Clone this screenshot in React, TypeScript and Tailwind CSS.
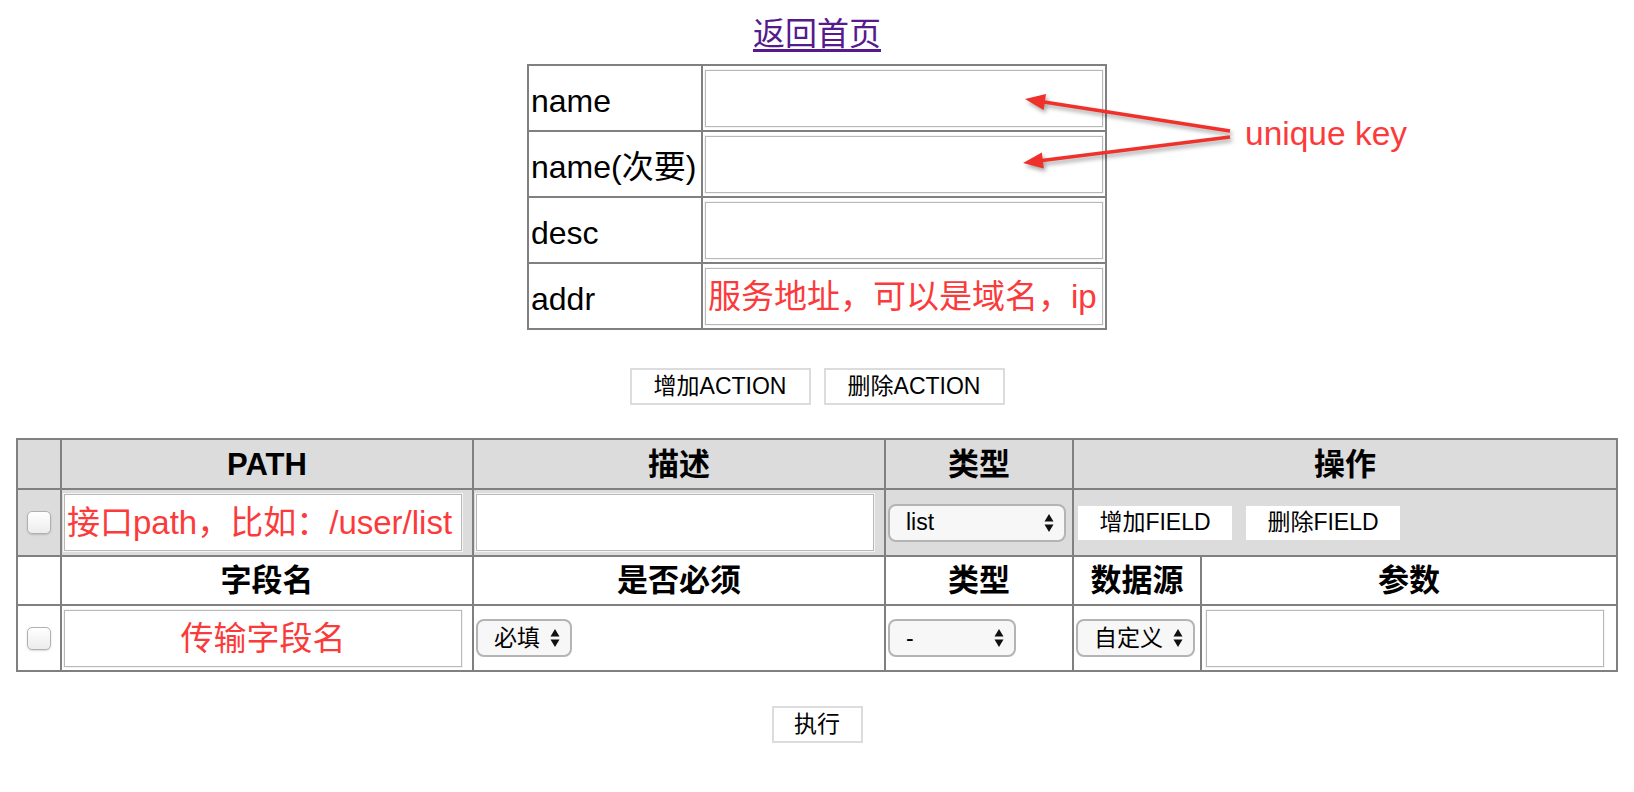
const fieldBox = "flex h-[57px] w-[398px] items-center overflow-hidden whitespace-nowrap border border-[#b8b8b8] bg-white px-[2px] text-[33px] leading-none text-[#fb3b3b] outline outline-1 outline-[#f4f4f4]";

function Select({ value, className }: { value: string; className: string }) {
  return (
    <span
      className={`relative inline-flex h-[38px] items-center rounded-[8px] border-2 border-[#b4b4b4] bg-[#f7f7f7] pl-[16px] align-middle text-[23px] leading-none ${className}`}
    >
      {value}
      <svg className="absolute right-[10px] top-1/2 -translate-y-1/2" width="10" height="20" viewBox="0 0 10 20">
        <path d="M5 1 L9.5 8.5 H0.5Z M5 19 L9.5 11.5 H0.5Z" fill="#111" />
      </svg>
    </span>
  );
}

function Check() {
  return (
    <input
      type="checkbox"
      className="mx-auto block h-[23px] w-[24px] appearance-none rounded-[5px] border border-[#b0b0b0] bg-gradient-to-b from-white to-[#ececec] shadow-[0_1px_2px_rgba(0,0,0,0.15)]"
    />
  );
}

export default function App() {
  return (
    <div className="relative min-h-[792px] bg-white pt-[14px] font-['Liberation_Sans','Noto_Sans_CJK_SC',sans-serif] text-black">
      {/* back link */}
      <div className="text-center text-[32px] leading-[40px]">
        <a href="#" className="text-[#551a8b] underline underline-offset-[4px]">
          返回首页
        </a>
      </div>

      {/* service info */}
      <table className="mx-auto mt-[10px] border-collapse border-2 border-[#808080]">
        <tbody>
          {[
            ["name", ""],
            ["name(次要)", ""],
            ["desc", ""],
            ["addr", "服务地址，可以是域名，ip"],
          ].map(([label, hint]) => (
            <tr key={label} className="h-[66px]">
              <td className="w-[174px] border-2 border-[#808080] px-[2px] pt-[6px] text-[32px] leading-none">{label}</td>
              <td className="border-2 border-[#808080] px-[2px]">
                <div className={fieldBox}>{hint}</div>
              </td>
            </tr>
          ))}
        </tbody>
      </table>

      {/* action buttons */}
      <div className="mt-[38px] flex justify-center gap-[13px]">
        <button className="h-[37px] w-[181px] border-2 border-[#dcdcdc] bg-white text-[23px] leading-none">增加ACTION</button>
        <button className="h-[37px] w-[181px] border-2 border-[#dcdcdc] bg-white text-[23px] leading-none">删除ACTION</button>
      </div>

      {/* actions table */}
      <table className="mx-auto mt-[33px] w-[1600px] table-fixed border-collapse border-2 border-[#808080]">
        <colgroup>
          <col className="w-[44px]" />
          <col className="w-[412px]" />
          <col className="w-[412px]" />
          <col className="w-[188px]" />
          <col className="w-[128px]" />
          <col className="w-[416px]" />
        </colgroup>
        <tbody>
          <tr className="h-[50px] bg-[#dcdcdc] text-[31px] font-bold leading-none">
            <td className="border-2 border-[#808080]"></td>
            <td className="border-2 border-[#808080] text-center">PATH</td>
            <td className="border-2 border-[#808080] text-center">描述</td>
            <td className="border-2 border-[#808080] text-center">类型</td>
            <td colSpan={2} className="border-2 border-[#808080] text-center">操作</td>
          </tr>
          <tr className="h-[67px] bg-[#dcdcdc]">
            <td className="border-2 border-[#808080]">
              <Check />
            </td>
            <td className="border-2 border-[#808080] px-[2px]">
              <div className={fieldBox}>接口path，比如：/user/list</div>
            </td>
            <td className="border-2 border-[#808080] px-[2px]">
              <div className={fieldBox}></div>
            </td>
            <td className="border-2 border-[#808080] px-[2px]">
              <Select value="list" className="w-[178px]" />
            </td>
            <td colSpan={2} className="border-2 border-[#808080] px-[4px]">
              <div className="flex gap-[14px]">
                <button className="h-[34px] w-[154px] bg-white text-[23px] leading-none">增加FIELD</button>
                <button className="h-[34px] w-[154px] bg-white text-[23px] leading-none">删除FIELD</button>
              </div>
            </td>
          </tr>
          <tr className="h-[49px] text-[31px] font-bold leading-none">
            <td className="border-2 border-[#808080]"></td>
            <td className="border-2 border-[#808080] text-center">字段名</td>
            <td className="border-2 border-[#808080] text-center">是否必须</td>
            <td className="border-2 border-[#808080] text-center">类型</td>
            <td className="border-2 border-[#808080] text-center">数据源</td>
            <td className="border-2 border-[#808080] text-center">参数</td>
          </tr>
          <tr className="h-[66px]">
            <td className="border-2 border-[#808080]">
              <Check />
            </td>
            <td className="border-2 border-[#808080] px-[2px]">
              <div className={`${fieldBox} justify-center`}>传输字段名</div>
            </td>
            <td className="border-2 border-[#808080] px-[2px]">
              <Select value="必填" className="w-[96px]" />
            </td>
            <td className="border-2 border-[#808080] px-[2px]">
              <Select value="-" className="w-[128px]" />
            </td>
            <td className="border-2 border-[#808080] px-[2px]">
              <Select value="自定义" className="w-[119px]" />
            </td>
            <td className="border-2 border-[#808080] px-[4px]">
              <div className={fieldBox}></div>
            </td>
          </tr>
        </tbody>
      </table>

      {/* submit */}
      <div className="mt-[34px] flex justify-center">
        <button className="h-[37px] w-[91px] border-2 border-[#dcdcdc] bg-white text-[23px] leading-none">执行</button>
      </div>

      {/* annotation */}
      <svg
        className="pointer-events-none absolute left-0 top-0 drop-shadow-[2px_3px_2px_rgba(0,0,0,0.35)]"
        width="1634"
        height="200"
        viewBox="0 0 1634 200"
      >
        <line x1="1230" y1="131" x2="1044" y2="102" stroke="#f0302a" strokeWidth="3.5" />
        <polygon points="1025,99 1046,94 1043.6,110" fill="#f0302a" />
        <line x1="1230" y1="137" x2="1042" y2="160.5" stroke="#f0302a" strokeWidth="3.5" />
        <polygon points="1023,163 1043.8,168.4 1041.8,152.6" fill="#f0302a" />
      </svg>
      <div className="pointer-events-none absolute left-[1245px] top-[117px] text-[33.5px] leading-none text-[#fb3b3b]">unique key</div>
    </div>
  );
}
